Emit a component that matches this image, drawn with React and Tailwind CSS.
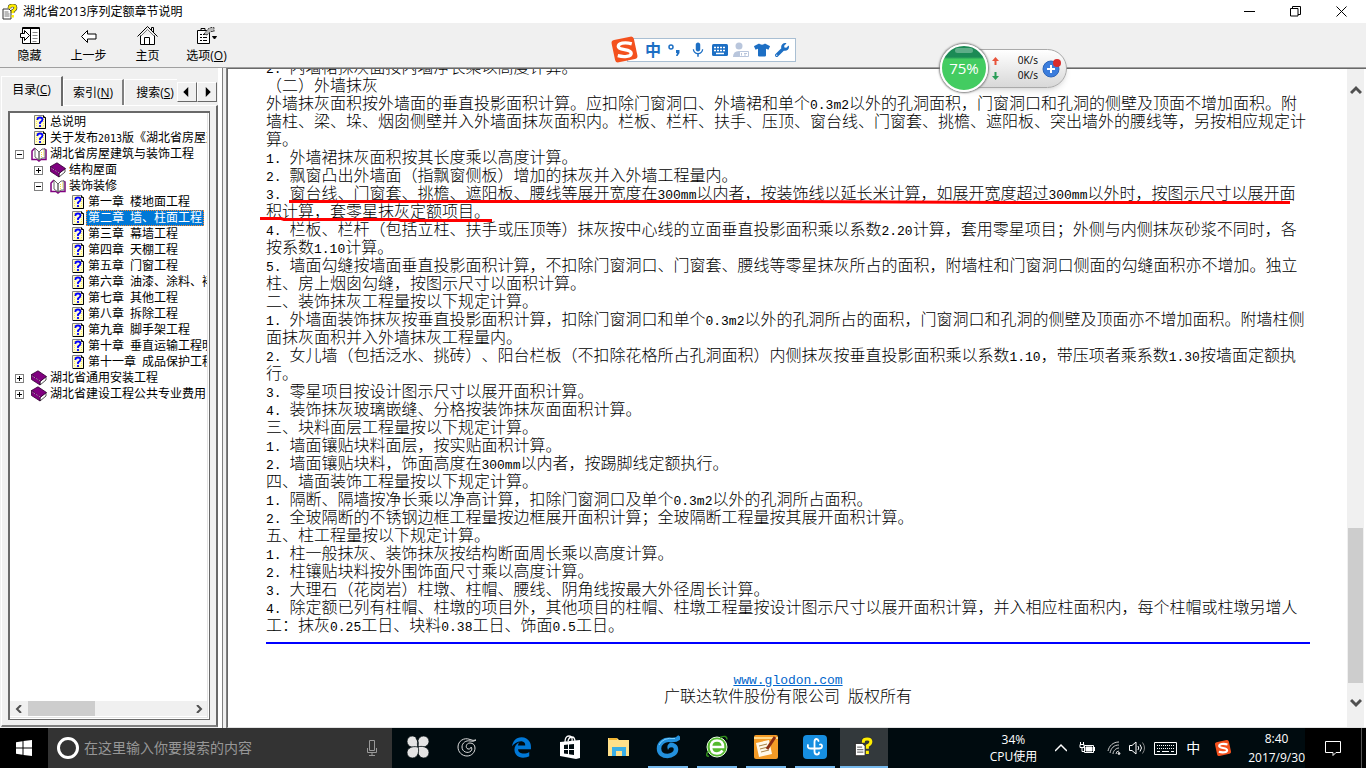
import { Fragment } from "react";
import { FaEdgeLegacy, FaTshirt, FaWrench } from "react-icons/fa";
import { MdMic } from "react-icons/md";

const chapters = [
  "第一章 楼地面工程",
  "第二章 墙、柱面工程",
  "第三章 幕墙工程",
  "第四章 天棚工程",
  "第五章 门窗工程",
  "第六章 油漆、涂料、裱糊工程",
  "第七章 其他工程",
  "第八章 拆除工程",
  "第九章 脚手架工程",
  "第十章 垂直运输工程明细",
  "第十一章 成品保护工程",
];

const treeItems = [
  { level: 0, kind: "page", label: "总说明" },
  { level: 0, kind: "page", label: "关于发布2013版《湖北省房屋建筑" },
  { level: 0, kind: "open", label: "湖北省房屋建筑与装饰工程" },
  { level: 1, kind: "book", label: "结构屋面" },
  { level: 1, kind: "open", label: "装饰装修" },
  ...chapters.map((label, i) => ({ level: 2, kind: "page", label, selected: i === 1 })),
  { level: 0, kind: "book", label: "湖北省通用安装工程" },
  { level: 0, kind: "book", label: "湖北省建设工程公共专业费用" },
];

const levelPadding = ["pl-[5px]", "pl-6", "pl-[43px]"];

const paragraphs = [
  "2. 内墙裙抹灰面按内墙净长乘以高度计算。",
  "（二）外墙抹灰",
  "外墙抹灰面积按外墙面的垂直投影面积计算。应扣除门窗洞口、外墙裙和单个0.3m2以外的孔洞面积，门窗洞口和孔洞的侧壁及顶面不增加面积。附墙柱、梁、垛、烟囱侧壁并入外墙面抹灰面积内。栏板、栏杆、扶手、压顶、窗台线、门窗套、挑檐、遮阳板、突出墙外的腰线等，另按相应规定计算。",
  "1. 外墙裙抹灰面积按其长度乘以高度计算。",
  "2. 飘窗凸出外墙面（指飘窗侧板）增加的抹灰并入外墙工程量内。",
  { marked: true, text: "3. 窗台线、门窗套、挑檐、遮阳板、腰线等展开宽度在300mm以内者，按装饰线以延长米计算，如展开宽度超过300mm以外时，按图示尺寸以展开面积计算，套零星抹灰定额项目。" },
  "4. 栏板、栏杆（包括立柱、扶手或压顶等）抹灰按中心线的立面垂直投影面积乘以系数2.20计算，套用零星项目；外侧与内侧抹灰砂浆不同时，各按系数1.10计算。",
  "5. 墙面勾缝按墙面垂直投影面积计算，不扣除门窗洞口、门窗套、腰线等零星抹灰所占的面积，附墙柱和门窗洞口侧面的勾缝面积亦不增加。独立柱、房上烟囱勾缝，按图示尺寸以面积计算。",
  "二、装饰抹灰工程量按以下规定计算。",
  "1. 外墙面装饰抹灰按垂直投影面积计算，扣除门窗洞口和单个0.3m2以外的孔洞所占的面积，门窗洞口和孔洞的侧壁及顶面亦不增加面积。附墙柱侧面抹灰面积并入外墙抹灰工程量内。",
  "2. 女儿墙（包括泛水、挑砖）、阳台栏板（不扣除花格所占孔洞面积）内侧抹灰按垂直投影面积乘以系数1.10，带压项者乘系数1.30按墙面定额执行。",
  "3. 零星项目按设计图示尺寸以展开面积计算。",
  "4. 装饰抹灰玻璃嵌缝、分格按装饰抹灰面面积计算。",
  "三、块料面层工程量按以下规定计算。",
  "1. 墙面镶贴块料面层，按实贴面积计算。",
  "2. 墙面镶贴块料，饰面高度在300mm以内者，按踢脚线定额执行。",
  "四、墙面装饰工程量按以下规定计算。",
  "1. 隔断、隔墙按净长乘以净高计算，扣除门窗洞口及单个0.3m2以外的孔洞所占面积。",
  "2. 全玻隔断的不锈钢边框工程量按边框展开面积计算；全玻隔断工程量按其展开面积计算。",
  "五、柱工程量按以下规定计算。",
  "1. 柱一般抹灰、装饰抹灰按结构断面周长乘以高度计算。",
  "2. 柱镶贴块料按外围饰面尺寸乘以高度计算。",
  "3. 大理石（花岗岩）柱墩、柱帽、腰线、阴角线按最大外径周长计算。",
  "4. 除定额已列有柱帽、柱墩的项目外，其他项目的柱帽、柱墩工程量按设计图示尺寸以展开面积计算，并入相应柱面积内，每个柱帽或柱墩另增人工：抹灰0.25工日、块料0.38工日、饰面0.5工日。",
];

// Latin runs take half the width of a Chinese character
function Mixed({ text, small }) {
  return text.split(/([\x20-\x7e]+)/).map((part, i) =>
    i % 2 ? (
      <span
        key={i}
        className={
          small
            ? "font-['DejaVu_Sans_Mono',monospace] text-[10px] leading-none"
            : "font-['Liberation_Mono',monospace] text-[13px] leading-none"
        }
      >
        {part}
      </span>
    ) : (
      <Fragment key={i}>{part}</Fragment>
    )
  );
}

function HelpPageIcon() {
  return (
    <svg className="ml-[3px] h-4 w-[13px] shrink-0" viewBox="0 0 13 16">
      <path d="M.5 1.5h9l2 2v11H.5z" fill="#fffbd0" stroke="#808080" />
      <path d="M2.5 3v10M4.5 13h6M9.5 5v8M4.5 3h4" stroke="#fff24a" strokeDasharray="1 1" />
      <path d="M9.5 1.500v2h2v11H1" fill="none" stroke="#000" />
      <path d="M3.500 6V5q0-1.500 2.500-1.500T8.500 5.500Q8.500 7 6 8.500V10M6 11v2" fill="none" stroke="#0000ff" strokeWidth="1.800" />
    </svg>
  );
}

function BookIcon() {
  return (
    <svg className="h-4 w-4 shrink-0" viewBox="0 0 16 16">
      <path d="m9 11.500 6-5v3.500l-6 5z" fill="#fff" stroke="#222" strokeWidth=".8" />
      <path d="M.5 4.500 7 .800l8.500 5.700L9 11.500z" fill="#800080" stroke="#300030" strokeWidth=".8" />
      <path d="M.5 4.500v5l8.500 5.500v-3.500z" fill="#800080" stroke="#300030" strokeWidth=".8" />
      <path d="M1.500 6 9 11" stroke="#d8a0d8" strokeDasharray="1 1" />
    </svg>
  );
}

function OpenBookIcon() {
  return (
    <svg className="h-4 w-4 shrink-0" viewBox="0 0 16 16">
      <path d="M4 2 1 5v8.500h5l2 1.500 2-1.500h5V4l-2-1" fill="#fff" stroke="#800080" strokeWidth="1.500" />
      <path d="m4 2 4 4v8l-4-3zM8 6l3-3h3v9h-3l-3 2z" fill="#fff" stroke="#666" />
      <path d="M10.500 6v6M12.500 4.500v6" stroke="#f5dc3c" strokeDasharray="1 1" />
    </svg>
  );
}

function Expander({ open }) {
  return (
    <svg className="h-[9px] w-[9px] shrink-0" viewBox="0 0 9 9" shapeRendering="crispEdges">
      <path d="M.5.500h8v8h-8z" fill="#fff" stroke="#808080" />
      <path d={open ? "M2 4.500h5" : "M2 4.500h5M4.500 2v5"} stroke="#000" />
    </svg>
  );
}

function TreeRow({ level, kind, label, selected }) {
  return (
    <li className={`flex h-4 items-center ${levelPadding[level]}`}>
      <span className="w-4 shrink-0">{kind !== "page" && <Expander open={kind === "open"} />}</span>
      {kind === "page" && <HelpPageIcon />}
      {kind === "book" && <BookIcon />}
      {kind === "open" && <OpenBookIcon />}
      <button
        className={
          selected
            ? "ml-px h-4 shrink-0 border border-dotted border-[#ff8728] bg-[#0078d7] px-px leading-[14px] text-white"
            : "ml-[3px] h-4 shrink-0 leading-4"
        }
      >
        <Mixed text={label} small />
      </button>
    </li>
  );
}

// question mark in front of a small sheet, shared by the title bar and the taskbar
function HelpAppIcon({ className }) {
  return (
    <svg className={className} viewBox="0 0 16 16">
      <path d="M1 5h6l2 2v8H1z" fill="#fff" stroke="#333" />
      <path d="M2.500 8h4M2.500 10h5M2.500 12h5" stroke="#777" />
      <path d="M7.500 4.500V3.500q0-2 3-2t3 2.200q0 1.800-2.800 3.300v2" fill="none" stroke="#333" strokeWidth="3.600" />
      <path d="M7.500 4.500V3.500q0-2 3-2t3 2.200q0 1.800-2.800 3.300v2.300M10.700 11v2.500" fill="none" stroke="#ffee00" strokeWidth="2.400" />
    </svg>
  );
}

function SogouLogo({ className }) {
  return (
    <svg className={className} viewBox="0 0 28 28">
      <rect x="3" y="3" width="22" height="22" rx="3" fill="#f4511e" transform="rotate(-12 14 14)" />
      <path d="M21 8.500C14 6.500 8 8 8 11c0 4 12.500 2 12.500 6.500 0 3.500-7 4-13 2.500" fill="none" stroke="#fff" strokeWidth="3.200" />
    </svg>
  );
}

function TitleBar() {
  return (
    <header className="flex h-[23px] shrink-0 items-center bg-white px-[2px] text-xs">
      <HelpAppIcon className="h-4 w-4" />
      <h1 className="ml-[5px]">湖北省2013序列定额章节说明</h1>
      <div className="ml-auto flex">
        <button aria-label="最小化" className="flex w-[46px] justify-center">
          <svg className="h-[11px] w-[11px]" viewBox="0 0 11 11"><path d="M0 5.500h11" stroke="#000" /></svg>
        </button>
        <button aria-label="还原" className="flex w-[46px] justify-center">
          <svg className="h-[11px] w-[11px]" viewBox="0 0 11 11" fill="none" stroke="#000">
            <path d="M.5 2.500h7.500v7.500H.5zM2.500 2.500v-2h8v8H8" />
          </svg>
        </button>
        <button aria-label="关闭" className="flex w-[46px] justify-center">
          <svg className="h-[11px] w-[11px]" viewBox="0 0 11 11"><path d="m.5.500 10 10m0-10-10 10" stroke="#000" /></svg>
        </button>
      </div>
    </header>
  );
}

function ToolButton({ label, accessKey, children }) {
  return (
    <button className="flex w-[59px] flex-col items-center">
      <svg className="h-6 w-6" viewBox="0 0 24 24" fill="none" stroke="#000">
        {children}
      </svg>
      <span className="whitespace-nowrap leading-4">
        {label}
        {accessKey && <>(<u>{accessKey}</u>)</>}
      </span>
    </button>
  );
}

function Toolbar() {
  return (
    <nav className="flex h-11 shrink-0 bg-[#f0f0f0] pt-px text-xs">
      <ToolButton label="隐藏">
        <path d="M4.500 3.500h17v16h-17z" fill="#fff" />
        <path d="M4 4.500h18M12.500 4v15" />
        <path d="M14.500 8.500h5M14.500 11.500h5M14.500 14.500h5M14.500 17.500h4" stroke="#888" />
        <path d="M2.500 9.500h4v-3l5 5-5 5v-3h-4z" fill="#fff" />
      </ToolButton>
      <ToolButton label="上一步">
        <path d="m4.500 12.500 6-6v3.500h8.500v5h-8.500v3.500z" fill="#fff" />
      </ToolButton>
      <ToolButton label="主页">
        <path d="M4.500 11.500v9h14v-9" fill="#fff" />
        <path d="m1.500 12.500 10-10 10 10M15.500 6.500V3.500h2V8.500M8.500 20.500v-7h5v7" />
        <path d="m5 12 6.500-6.500L18 12" stroke="#777" />
      </ToolButton>
      <ToolButton label="选项" accessKey="O">
        <path d="M2.500 6.500h12v13h-12z" fill="#fff" />
        <path d="M4 6.500h2v-2h4v2M5 10.500h2M5 13.500h2M5 16.500h2M8 10.500h4M8 13.500h4M8 16.500h4" />
        <path d="m9 10 4-5 3-1.500h3v4h-3l-4 3.500z" fill="#bbb" stroke="#333" strokeDasharray="2 1" />
        <path d="M17.500 12.500h4l-2 2.500z" fill="#000" />
      </ToolButton>
    </nav>
  );
}

function Tab({ label, accessKey, className }) {
  return (
    <button role="tab" className={`overflow-hidden border-l border-t border-white whitespace-nowrap ${className}`}>
      {label}(<u>{accessKey}</u>)
    </button>
  );
}

function TabArrow({ label, d }) {
  return (
    <button
      aria-label={label}
      className="flex h-5 w-5 items-center justify-center border-b border-l border-r border-t border-b-[#696969] border-l-white border-r-[#696969] border-t-white"
    >
      <svg className="h-[10px] w-[10px]" viewBox="0 0 8 8"><path d={d} /></svg>
    </button>
  );
}

function Sidebar() {
  return (
    <aside className="flex w-[222px] shrink-0 flex-col border-r-4 border-white bg-[#f0f0f0] pb-px pl-px pt-2 text-xs">
      <div role="tablist" className="flex h-[29px] items-end">
        <Tab label="目录" accessKey="C" className="relative z-10 -mb-px h-[30px] w-[62px] border-r-2 border-r-[#696969] bg-[#f0f0f0] pb-1" />
        <Tab label="索引" accessKey="N" className="h-[26px] w-[61px] border-r-2 border-r-[#808080]" />
        <Tab label="搜索" accessKey="S" className="h-[26px] w-[53px] pl-2" />
        <div className="mb-[3px] flex">
          <TabArrow label="向左滚动" d="M5 0v8L1 4z" />
          <TabArrow label="向右滚动" d="M3 0v8l4-4z" />
        </div>
      </div>
      <div className="flex min-h-0 flex-1 flex-col border-b-2 border-l border-r-2 border-t border-b-[#808080] border-l-white border-r-[#696969] border-t-white px-[6px] py-[5px]">
        <div className="flex min-h-0 flex-1 flex-col border-b border-l-2 border-r border-t-2 border-[#696969] bg-white pb-px pr-px">
          <div className="flex min-h-0 flex-1 flex-col border-b border-r border-[#e3e3e3] pt-px">
            <ul className="min-h-0 flex-1 overflow-hidden whitespace-nowrap">
              {treeItems.map((item) => (
                <TreeRow key={item.label} {...item} />
              ))}
            </ul>
            <div className="mb-px flex h-[15px] shrink-0 items-center bg-[#f0f0f0] text-[#505050]">
              <svg className="mx-[5px] h-2 w-2" viewBox="0 0 8 8" fill="none" stroke="currentColor" strokeWidth="2"><path d="M6 0 2 4l4 4" /></svg>
              <div className="h-full w-[67px] bg-[#cdcdcd]" />
              <svg className="ml-auto mr-1 h-2 w-2" viewBox="0 0 8 8" fill="none" stroke="currentColor" strokeWidth="2"><path d="m2 0 4 4-4 4" /></svg>
            </div>
          </div>
        </div>
      </div>
    </aside>
  );
}

function Paragraph({ item }) {
  if (typeof item === "string") {
    return <p><Mixed text={item} /></p>;
  }
  return (
    <p className="relative">
      <Mixed text={item.text} />
      <svg className="absolute left-0 top-0 h-9 w-full overflow-visible" fill="none" stroke="#ff0000" strokeWidth="3">
        <path d="M23 17.500h500l220 1h281M-6 34.500h21l3 1h114l3 1h91" />
      </svg>
    </p>
  );
}

function Topic() {
  return (
    <main className="flex min-w-0 flex-1 border-b border-l border-t border-b-[#e3e3e3] border-l-[#696969] border-t-[#696969] bg-white">
      <article className="flex min-w-0 flex-1 flex-col justify-end overflow-hidden pb-[22px] pl-[38px] pr-[37px] text-base font-light leading-[18px] [text-spacing-trim:space-all]">
        {paragraphs.map((item, i) => (
          <Paragraph key={i} item={item} />
        ))}
        <hr className="mb-[25px] mt-2 border-t-2 border-[#0000ff]" />
        <footer className="text-center">
          <a href="#" className="text-[#0066cc] underline"><Mixed text="www.glodon.com" /></a>
          <p><Mixed text="广联达软件股份有限公司 版权所有" /></p>
        </footer>
      </article>
      <div className="mr-[2px] flex w-[17px] shrink-0 flex-col items-center bg-[#f0f0f0] pb-[18px] pt-[15px] text-[#505050]">
        <svg className="h-3 w-3" viewBox="0 0 12 12" fill="none" stroke="currentColor" strokeWidth="3"><path d="m1 9 5-5 5 5" /></svg>
        <div className="min-h-0 flex-1" />
        <div className="mb-[14px] h-[155px] w-[15px] bg-[#cdcdcd]" />
        <svg className="h-3 w-3" viewBox="0 0 12 12" fill="none" stroke="currentColor" strokeWidth="3"><path d="m1 3 5 5 5-5" /></svg>
      </div>
    </main>
  );
}

function ImeBar() {
  return (
    <div className="absolute left-[610px] top-[35px] flex items-center">
      <SogouLogo className="relative z-10 h-[29px] w-[29px]" />
      <div className="-ml-3 flex h-6 w-[169px] items-center gap-[5px] border border-[#a9bfd3] bg-white pl-[17px] pr-1 text-[#1d6fc4]">
        <span className="text-base font-bold leading-none">中</span>
        <svg className="h-4 w-[18px]" viewBox="0 0 18 16"><circle cx="5" cy="5" r="2" fill="none" stroke="currentColor" strokeWidth="1.500" /><path d="M10 8h3.500v3l-2 3H10l1-3h-1z" fill="currentColor" /></svg>
        <MdMic className="h-[18px] w-[18px]" />
        <svg className="h-4 w-4" viewBox="0 0 16 16">
          <rect x="0" y="2" width="16" height="12" rx="1.500" fill="currentColor" />
          <path d="M2 5.500h12M2 8.500h12" stroke="#fff" strokeWidth="1.500" strokeDasharray="2 1" />
          <path d="M4 11.500h8" stroke="#fff" strokeWidth="1.500" />
        </svg>
        <svg className="h-4 w-4 text-[#b9c6dc]" viewBox="0 0 16 16" fill="currentColor">
          <circle cx="6" cy="4" r="3.500" />
          <path d="M0 15q0-6 6-6 3 0 4 1v5z" />
          <path d="M6.500 9.500h9v5h-9z" fill="#fff" stroke="currentColor" />
          <path d="M8.500 11v2.500M11 11.500h3M11 13h2" stroke="currentColor" />
        </svg>
        <FaTshirt className="h-4 w-4" />
        <FaWrench className="h-[14px] w-[14px]" />
      </div>
    </div>
  );
}

function SpeedBall() {
  return (
    <div className="absolute left-[940px] top-[44px] flex items-center text-[10px]">
      <div className="relative z-10 flex h-12 w-12 items-center justify-center rounded-full border-2 border-white bg-linear-to-b from-[#1b8a55] from-25% to-[#43cc61] to-30% text-[15px] text-white shadow-[0_0_2px_1px_#777]">
        <span className="absolute left-[13px] top-[2px] h-[5px] w-[18px] rounded-full bg-white/30" />
        75%
      </div>
      <div className="-ml-6 flex h-[39px] w-[103px] items-center rounded-r-full border border-[#aaa] bg-linear-to-b from-white to-[#d8d8d8] pl-[27px] shadow-md">
        <div className="flex w-[46px] flex-col">
          <p className="flex items-center justify-between leading-[15px]">
            <svg className="h-2 w-[7px]" viewBox="0 0 7 8"><path d="M3.500 0 7 4H4.500v4h-2V4H0z" fill="#e8533a" /></svg>0K/s
          </p>
          <p className="flex items-center justify-between leading-[15px]">
            <svg className="h-2 w-[7px]" viewBox="0 0 7 8"><path d="M3.500 8 7 4H4.500V0h-2v4H0z" fill="#2a9d57" /></svg>0K/s
          </p>
        </div>
        <svg className="ml-1 h-5 w-5" viewBox="0 0 20 20">
          <circle cx="9" cy="11" r="8" fill="#3b7ddd" stroke="#2d65b8" />
          <path d="M9 7v8M5 11h8" stroke="#fff" strokeWidth="2" />
          <circle cx="15" cy="5" r="4" fill="#d92c2c" />
        </svg>
      </div>
    </div>
  );
}

function TaskButton({ label, running, active, children }) {
  return (
    <button
      aria-label={label}
      className={`flex h-full w-12 flex-col items-center ${active ? "bg-[#33393c]" : ""}`}
    >
      <span className="flex flex-1 items-center">{children}</span>
      <span className={`h-[2px] ${active ? "w-full" : "w-10"} ${running ? "bg-[#76b9ed]" : ""}`} />
    </button>
  );
}

function Taskbar() {
  return (
    <div className="flex h-10 shrink-0 items-stretch bg-[#000b0f] text-xs text-white">
      <button aria-label="开始" className="flex w-12 items-center justify-center bg-black">
        <svg className="h-4 w-4" viewBox="0 0 16 16" fill="#fff">
          <path d="M0 2.300 6.500 1.300V7.500H0zM7.500 1.100 16 0v7.500H7.500zM0 8.500h6.500v6.200L0 13.700zM7.500 8.500H16V16l-8.500-1.100z" />
        </svg>
      </button>
      <label className="flex w-[344px] items-center bg-[#333] pl-[9px] pr-3">
        <span className="h-[22px] w-[22px] shrink-0 rounded-full border-[3px] border-white" />
        <input
          type="text"
          aria-label="搜索"
          placeholder="在这里输入你要搜索的内容"
          className="ml-[5px] min-w-0 flex-1 text-sm placeholder:text-[#979797]"
        />
        <svg className="h-[18px] w-4" viewBox="0 0 16 18" fill="none" stroke="#999">
          <path d="M5.500 1.500h5v10h-5zM3.500 9v4.500h9V9M8 13.500v3M5 16.500h6" />
        </svg>
      </label>
      <div className="flex gap-px pl-[2px]">
        <TaskButton label="风扇">
          <svg className="h-[22px] w-[22px]" viewBox="0 0 22 22" fill="#e4e4e4">
            {[0, 90, 180, 270].map((a) => (
              <path key={a} d="M11 11C8 12.500 0 11.500 0 5.500 0 2 2.500 0 5.500 0 9.500 0 12.500 5 11 11z" stroke="#000b0f" strokeWidth=".8" transform={`rotate(${a} 11 11)`} />
            ))}
            <path d="M11 11Q12.500 6 9 2" fill="none" stroke="#000b0f" />
          </svg>
        </TaskButton>
        <TaskButton label="浏览器">
          <svg className="h-5 w-5" viewBox="0 0 20 20" fill="none" stroke="#ddd">
            <path d="M19 3q-3 1-6-.500C7 0 1 4 1 10c0 5 4 9 9 9s8-4 8-8c0-3-2-5-5-5-4 0-5 5-2 6 2 .500 3-1 3-2q2 2 0 4c-3 3-9 1-9-4 0-4 4-7 8-6q4 1 6-1z" />
          </svg>
        </TaskButton>
      </div>
      <div className="flex gap-px pl-[6px]">
        <TaskButton label="Edge">
          <FaEdgeLegacy className="h-[21px] w-[21px] text-[#0078d7]" />
        </TaskButton>
        <TaskButton label="应用商店">
          <svg className="h-6 w-[22px]" viewBox="0 0 22 24">
            <path d="M6 7q0-6 4-6t3 6M9 6q1-4 4-4t3 5" fill="none" stroke="#fff" strokeWidth="1.300" />
            <path d="m1 7 20-2v18l-4 1-16-3z" fill="#fff" />
            <path d="m5 10 4-.500V14H5zm5-.500 5-.500v5h-5zM5 15h4v4l-4-.500zm5 0h5v5l-5-.800z" fill="#000b0f" />
          </svg>
        </TaskButton>
        <TaskButton label="文件资源管理器">
          <svg className="h-5 w-[22px]" viewBox="0 0 22 20">
            <path d="M0 1h9l2 2h10v16H0z" fill="#ffe08a" />
            <path d="M1 1h8v2H1z" fill="#f2b632" />
            <path d="M4 10h14v9h-4v-5H8v5H4z" fill="#3aaee6" />
          </svg>
        </TaskButton>
        <TaskButton label="广联达浏览器" running>
          <svg className="h-6 w-6" viewBox="0 0 24 24" fill="none">
            <path d="M24 1.500q-3 4-9 3.500C8 4 3 8 3 13.500 3 18.500 7 21 11.500 21S20 18 20 14.500 17 9.500 14 10" stroke="#2391dd" strokeWidth="4.500" />
            <path d="M14 8q-4 2-2 7 1-3 4-3z" fill="#2391dd" />
            <path d="M19 3.500Q7 2 3 10" stroke="#7bd0ff" />
          </svg>
        </TaskButton>
        <TaskButton label="360浏览器" running>
          <svg className="h-6 w-6" viewBox="0 0 24 24">
            <circle cx="12" cy="12" r="10" fill="#55b92f" stroke="#e8ffe0" />
            <path d="M17.500 15.500Q15.500 18.500 12 18.500 6 18.500 6 12T12 5.500 18 12H7" fill="none" stroke="#fff" strokeWidth="2.600" />
            <path d="M3 16q-3 6 1 5M15 2.500q7-3 7 2" fill="none" stroke="#2f8c1b" strokeWidth="1.500" />
          </svg>
        </TaskButton>
        <TaskButton label="记事本" running>
          <svg className="h-6 w-6" viewBox="0 0 24 24">
            <rect x="0" y="0" width="24" height="24" rx="2" fill="#f39b26" />
            <path d="M0 3h24" stroke="#ffd98c" strokeWidth="2" />
            <path d="m2 8 13-3 3 14-13 3z" fill="#fff8e8" />
            <path d="m5 11 8-2M6 14l8-2M7 17l8-2" stroke="#a98245" />
            <path d="m21 2-8 12" stroke="#8a2c12" strokeWidth="3" />
          </svg>
        </TaskButton>
        <TaskButton label="计价软件" running>
          <svg className="h-6 w-6" viewBox="0 0 24 24">
            <rect width="24" height="24" rx="4" fill="#168ee0" />
            <path d="M15.500 6q-.500-2-2-2-2 0-2 3v9.500q0 3 2.500 3 2 0 2-2M5 10q-1 3.500 3 3.500h8q3.500 0 3-3-.500-1.500-2-1" fill="none" stroke="#fff" strokeWidth="1.800" strokeLinecap="round" />
          </svg>
        </TaskButton>
        <TaskButton label="湖北省2013序列定额章节说明" running active>
          <HelpAppIcon className="h-5 w-5" />
        </TaskButton>
      </div>
      <div className="ml-auto flex items-center">
        <p className="mr-[18px] text-center leading-[17px]">34%<br />CPU使用</p>
        <svg className="mr-3 h-3 w-3" viewBox="0 0 12 12" fill="none" stroke="#fff" strokeWidth="1.500"><path d="m0 9 6-6 6 6" /></svg>
        <svg className="mr-3 h-3 w-4" viewBox="0 0 16 12" fill="none" stroke="#fff">
          <path d="M5.500 3.500h9v7h-9zM1 2.500h4v3H1zM1.500 0v2M4.500 0v2M3 6v3.500h2" />
          <path d="M7 5h6v4H7z" fill="#fff" /><path d="M15.500 5v4" />
        </svg>
        <svg className="mr-2 h-[14px] w-[14px]" viewBox="0 0 14 14" fill="none" stroke="#ccc">
          <path d="M1 10C2 5 6 1 12 1M3 12C4 7 7 4 12 4M6 13c0-3 3-6 6-6M9 13q0-3 3-3" /><circle cx="12" cy="12.500" r="1" fill="#fff" />
        </svg>
        <svg className="mr-2 h-[14px] w-[17px]" viewBox="0 0 17 14" fill="none" stroke="#fff">
          <path d="M.5 4.500H3l4-3.500v12L3 9.500H.5zM9 5q1.500 2 0 4M11 3.500q3 3.500 0 7" /><path d="M13.500 1.500q4 5.500 0 11" stroke="#888" />
        </svg>
        <svg className="mr-[9px] h-[13px] w-[23px]" viewBox="0 0 23 13" fill="none" stroke="#fff">
          <path d="M.5.500h22v12H.5z" /><path d="M3 3.500h17M3 6.500h17" strokeDasharray="1 1" /><path d="M3 9.500h3M8 9.500h7M17 9.500h3" />
        </svg>
        <span className="mr-[14px] text-sm leading-none">中</span>
        <SogouLogo className="mr-4 h-[18px] w-[18px]" />
        <p className="text-center leading-[19px]">8:40<br />2017/9/30</p>
      </div>
      <button aria-label="通知" className="flex w-[57px] items-center justify-center border-r border-[#555] bg-black">
        <svg className="h-4 w-4" viewBox="0 0 16 16" fill="none" stroke="#fff"><path d="M.5 1.500h15v11H11l-3 3v-3H.5z" /></svg>
      </button>
      <div className="w-1 bg-black" />
    </div>
  );
}

export default function App() {
  return (
    <div lang="zh-CN" className="relative flex h-screen flex-col overflow-hidden bg-white font-['Open_Sans','Noto_Sans_CJK_SC',sans-serif] text-black">
      <TitleBar />
      <Toolbar />
      <div className="flex min-h-0 flex-1 border-t border-[#a0a0a0]">
        <Sidebar />
        <div className="w-[5px] shrink-0 border-l border-r border-[#808080] bg-[#f0f0f0]" />
        <Topic />
      </div>
      <Taskbar />
      <ImeBar />
      <SpeedBall />
    </div>
  );
}
